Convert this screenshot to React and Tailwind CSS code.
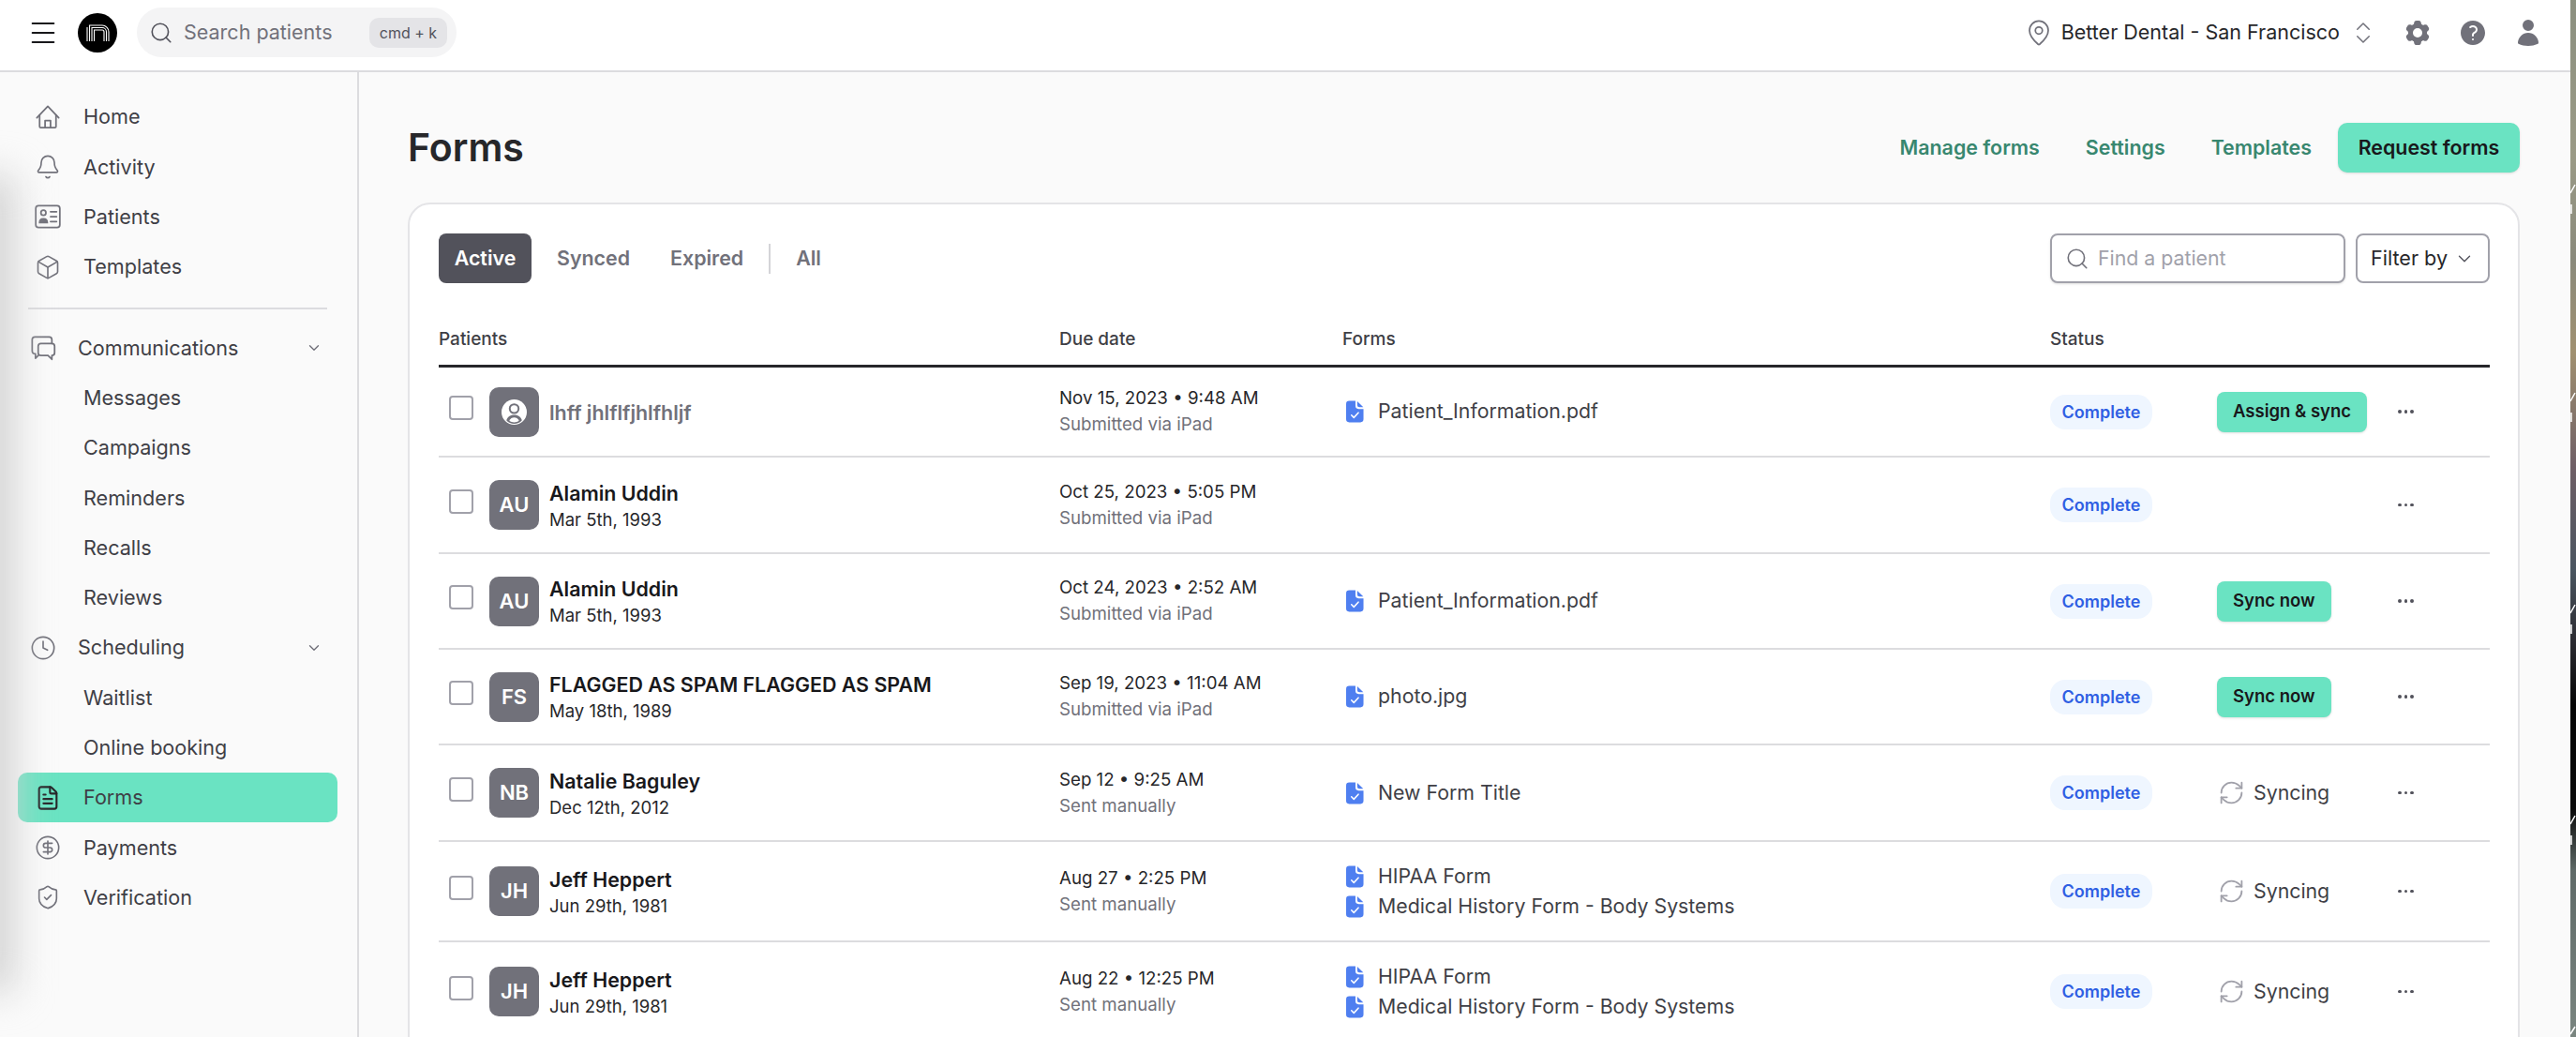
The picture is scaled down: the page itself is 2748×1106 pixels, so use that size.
import React from "react";
import { Bell, Box, ChevronDown, ChevronsUpDown, CircleDollarSign, Clock, FileText, MapPin, Menu, RefreshCw, Search, ShieldCheck } from "lucide-react";
import { HiCog6Tooth, HiQuestionMarkCircle, HiUser } from "react-icons/hi2";

const HomeIcon = ({ className }) => (
  <svg viewBox="0 0 24 24" fill="none" stroke="currentColor" strokeWidth="1.5" strokeLinecap="round" strokeLinejoin="round" className={className}>
    <path d="M2 12.500 12 2l10 10.500" />
    <path d="M4.500 10v10.500a1 1 0 0 0 1 1h13a1 1 0 0 0 1-1V10" />
    <path d="M9.500 21.500v-6.500h5v6.500" />
  </svg>
);

const PatientsIcon = ({ className }) => (
  <svg viewBox="0 0 24 24" fill="none" stroke="currentColor" strokeWidth="1.5" strokeLinecap="round" className={className}>
    <rect x="1" y="2" width="22" height="20" rx="2.500" />
    <circle cx="8" cy="8.500" r="2.300" />
    <path d="M4.500 17.500c0-2.300 1.500-3.500 3.500-3.500s3.500 1.200 3.500 3.500z" fill="currentColor" />
    <path d="M14.500 7.500H20M14.500 12H20M14.500 16.500H20" />
  </svg>
);

const MessagesIcon = ({ className }) => (
  <svg viewBox="0 0 24 24" fill="none" stroke="currentColor" strokeWidth="1.5" strokeLinecap="round" strokeLinejoin="round" className={className}>
    <path d="M20 8V4.500A2.500 2.500 0 0 0 17.500 2h-13A2.500 2.500 0 0 0 2 4.500v10c0 2 1 3 3 3v4l3-3" />
    <path d="M10 8h10a2.500 2.500 0 0 1 2.500 2.500v6a2.500 2.500 0 0 1-2.500 2.500v3.500L16.500 19H10a2.500 2.500 0 0 1-2.500-2.500v-6A2.500 2.500 0 0 1 10 8z" />
  </svg>
);

const FormFileIcon = () => (
  <svg viewBox="0 0 20 25" className="w-[19px] h-[24px] shrink-0">
    <path d="M3.500 0.500h7v5.500a3.500 3.500 0 0 0 3.500 3.500h5.500v11.500a3.500 3.500 0 0 1-3.500 3.500H3.500A3.500 3.500 0 0 1 0 21V4a3.500 3.500 0 0 1 3.500-3.500z" fill="#4f7ff0" />
    <path d="M12.500 0.800 19.300 7.500H15a2.500 2.500 0 0 1-2.500-2.500z" fill="#4f7ff0" />
    <path d="M6 16.500l2.700 2.700 5-5.500" fill="none" stroke="#fff" strokeWidth="1.600" strokeLinecap="round" strokeLinejoin="round" />
  </svg>
);

const BlankAvatarIcon = () => (
  <svg viewBox="0 0 26 26" className="w-[27px] h-[27px]">
    <circle cx="13" cy="13" r="13" fill="#fff" />
    <circle cx="13" cy="9.500" r="5.500" fill="#71717a" />
    <circle cx="13" cy="9.500" r="3.600" fill="#fff" />
    <path d="M5 21.500c1.500-4 4.500-5.500 8-5.500s6.500 1.500 8 5.500c-2 2.500-5 3.500-8 3.500s-6-1-8-3.500z" fill="#71717a" />
    <path d="M8 22c1-2.500 3-3.500 5-3.500s4 1 5 3.500c-1.500 1-3.300 1.500-5 1.500s-3.500-.5-5-1.500z" fill="#fff" />
  </svg>
);

const Logo = () => (
  <svg viewBox="0 0 42 42" className="w-[42px] h-[42px] shrink-0">
    <circle cx="21" cy="21" r="21" fill="#000" />
    <g fill="none" stroke="#fff" strokeWidth="1.100">
      <path d="M10 30V15M12.500 30V13H26a7 7 0 0 1 7 7v10" />
      <path d="M15 30V15.500H26a4.500 4.500 0 0 1 4.500 4.500v10" />
      <path d="M17.500 30V18H26a2 2 0 0 1 2 2v10" />
    </g>
  </svg>
);

const topNav = [
  { label: "Home", icon: HomeIcon },
  { label: "Activity", icon: Bell },
  { label: "Patients", icon: PatientsIcon },
  { label: "Templates", icon: Box },
];

const lowerNav = [
  { label: "Communications", icon: MessagesIcon, group: true },
  { label: "Messages" },
  { label: "Campaigns" },
  { label: "Reminders" },
  { label: "Recalls" },
  { label: "Reviews" },
  { label: "Scheduling", icon: Clock, group: true },
  { label: "Waitlist" },
  { label: "Online booking" },
  { label: "Forms", icon: FileText, active: true },
  { label: "Payments", icon: CircleDollarSign },
  { label: "Verification", icon: ShieldCheck },
];

const rows = [
  { h: "h-[96px]", initials: null, name: "lhff jhlflfjhlfhljf", dob: null, date: "Nov 15, 2023 • 9:48 AM", sub: "Submitted via iPad", forms: ["Patient_Information.pdf"], action: "Assign & sync" },
  { h: "h-[103px]", initials: "AU", name: "Alamin Uddin", dob: "Mar 5th, 1993", date: "Oct 25, 2023 • 5:05 PM", sub: "Submitted via iPad", forms: [], action: null },
  { h: "h-[102px]", initials: "AU", name: "Alamin Uddin", dob: "Mar 5th, 1993", date: "Oct 24, 2023 • 2:52 AM", sub: "Submitted via iPad", forms: ["Patient_Information.pdf"], action: "Sync now" },
  { h: "h-[102px]", initials: "FS", name: "FLAGGED AS SPAM FLAGGED AS SPAM", dob: "May 18th, 1989", date: "Sep 19, 2023 • 11:04 AM", sub: "Submitted via iPad", forms: ["photo.jpg"], action: "Sync now" },
  { h: "h-[103px]", initials: "NB", name: "Natalie Baguley", dob: "Dec 12th, 2012", date: "Sep 12 • 9:25 AM", sub: "Sent manually", forms: ["New Form Title"], action: "syncing" },
  { h: "h-[107px]", initials: "JH", name: "Jeff Heppert", dob: "Jun 29th, 1981", date: "Aug 27 • 2:25 PM", sub: "Sent manually", forms: ["HIPAA Form", "Medical History Form - Body Systems"], action: "syncing" },
  { h: "h-[107px]", initials: "JH", name: "Jeff Heppert", dob: "Jun 29th, 1981", date: "Aug 22 • 12:25 PM", sub: "Sent manually", forms: ["HIPAA Form", "Medical History Form - Body Systems"], action: "syncing" },
];

const NavRow = ({ item }) => {
  const Icon = item.icon;
  if (item.group) {
    return (
      <div className="h-[53.3px] ml-[19px] mr-[21px] pl-[13px] pr-[16px] flex items-center text-[21.6px] text-[#3f3f46]">
        <Icon className="w-[28px] h-[28px] text-[#71717a] mr-[23px]" strokeWidth={1.4} />
        <span className="flex-1">{item.label}</span>
        <ChevronDown className="w-[18px] h-[18px] text-[#71717a]" strokeWidth={1.8} />
      </div>
    );
  }
  if (!Icon) {
    return <div className="h-[53.3px] ml-[19px] mr-[21px] pl-[70px] flex items-center text-[21.6px] text-[#3f3f46]">{item.label}</div>;
  }
  return (
    <div className={`h-[53.3px] ml-[19px] mr-[21px] pl-[18px] flex items-center text-[21.6px] text-[#3f3f46] rounded-[10px] ${item.active ? "bg-[#6ae3c2]" : ""}`}>
      <Icon className={`w-[28px] h-[28px] mr-[24px] ${item.active ? "text-[#27272a]" : "text-[#71717a]"}`} strokeWidth={item.active ? 1.8 : 1.4} />
      {item.label}
    </div>
  );
};

const TableRow = ({ row }) => (
  <div className={`${row.h} grid grid-cols-[662px_302px_755px_178px_193px_1fr] items-center border-b-2 border-[#dcdcdf]`}>
    <div className="flex items-center">
      <div className="w-[26px] h-[26px] ml-[11px] mr-[17px] mb-2 rounded-[4px] border-2 border-[#a1a1aa] bg-white shrink-0" />
      <div className="w-[53px] h-[53px] rounded-[10px] bg-[#71717a] flex items-center justify-center text-white text-[22px] font-semibold shrink-0">
        {row.initials || <BlankAvatarIcon />}
      </div>
      <div className="ml-[11px] pt-[2px]">
        <div className={`text-[21.4px] leading-[28px] font-semibold ${row.initials ? "text-[#18181b]" : "text-[#71717a]"}`}>{row.name}</div>
        {row.dob && <div className="text-[18.5px] leading-[28px] text-[#27272a]">{row.dob}</div>}
      </div>
    </div>
    <div>
      <div className="text-[18.7px] leading-[28px] text-[#27272a]">{row.date}</div>
      <div className="text-[18.7px] leading-[28px] text-[#71717a]">{row.sub}</div>
    </div>
    <div className="flex flex-col gap-[2px] pl-[4px]">
      {row.forms.map((f, i) => (
        <div key={i} className="flex items-center h-[30px] text-[21.3px] text-[#3f3f46]">
          <FormFileIcon />
          <span className="ml-[15px]">{f}</span>
        </div>
      ))}
    </div>
    <div>
      <span className="inline-flex items-center justify-center w-[109px] h-[37px] rounded-[16px] bg-[#eff6ff] text-[#2f5fe3] text-[18px] font-semibold">Complete</span>
    </div>
    <div>
      {row.action === "syncing" ? (
        <div className="flex items-center pl-[1px] text-[21.3px] text-[#3f3f46]">
          <RefreshCw className="w-[29px] h-[29px] text-[#a1a1aa] mr-[9px]" strokeWidth={1.5} />
          Syncing
        </div>
      ) : row.action ? (
        <button className="h-[43px] px-[17px] rounded-[8px] bg-[#6ae3c2] text-[18.5px] font-semibold text-[#18181b] shadow-sm">{row.action}</button>
      ) : null}
    </div>
    <div className="text-[#52525b] flex gap-[3px]">
      <span className="w-[3.500px] h-[3.500px] rounded-full bg-current" />
      <span className="w-[3.500px] h-[3.500px] rounded-full bg-current" />
      <span className="w-[3.500px] h-[3.500px] rounded-full bg-current" />
    </div>
  </div>
);

const App = () => {
  return (
    <div className="w-[2748px] h-[1106px] flex overflow-hidden bg-[#fafafa] font-[Inter,sans-serif] text-[#27272a]">
      <div className="w-[2742px] flex flex-col">
        {/* Top bar */}
        <header className="h-[77px] shrink-0 bg-white border-b-2 border-[#dcdcdf] flex items-center pl-[29px] pr-[29px] pb-[6px]">
          <Menu className="w-[34px] h-[34px] text-[#18181b]" strokeWidth={1.4} />
          <div className="ml-[20px]"><Logo /></div>
          <div className="ml-[21px] w-[341px] h-[53px] rounded-full bg-[#f4f4f5] flex items-center pl-[13px] pr-[10px]">
            <Search className="w-[26px] h-[26px] text-[#52525b]" strokeWidth={1.5} />
            <span className="ml-[11px] flex-1 text-[21.5px] text-[#71717a]">Search patients</span>
            <span className="w-[83px] h-[32px] rounded-[10px] bg-[#e4e4e7] flex items-center justify-center text-[16px] text-[#52525b]">cmd + k</span>
          </div>
          <div className="ml-auto flex items-center">
            <MapPin className="w-[30px] h-[30px] text-[#71717a] mr-[9px]" strokeWidth={1.4} />
            <span className="text-[21.5px] text-[#27272a]">Better Dental - San Francisco</span>
            <ChevronsUpDown className="w-[30px] h-[30px] text-[#71717a] ml-[10px] mr-[27px]" strokeWidth={1.2} />
            <HiCog6Tooth className="w-[32px] h-[32px] text-[#71717a]" />
            <HiQuestionMarkCircle className="w-[32px] h-[32px] text-[#71717a] ml-[27px]" />
            <HiUser className="w-[32px] h-[32px] text-[#71717a] ml-[27px]" />
          </div>
        </header>

        <div className="flex flex-1 min-h-0">
          {/* Sidebar */}
          <aside className="relative w-[383px] shrink-0 border-r-2 border-[#dcdcdf] pt-[21px] overflow-hidden">
            {topNav.map((item) => <NavRow key={item.label} item={item} />)}
            <div className="mt-[17px] mb-[14px] ml-[30px] mr-[32px] h-[2px] bg-[#dcdcdf]" />
            {lowerNav.map((item) => <NavRow key={item.label} item={item} />)}
            <div className="absolute -left-[30px] top-[110px] w-[44px] h-[870px] bg-[#d0d0d0] blur-[20px] pointer-events-none" />
          </aside>

          {/* Main */}
          <main className="flex-1 min-w-0 pl-[52px] pr-[54px] pt-[54px] overflow-hidden">
            <div className="h-[53px] flex items-center">
              <h1 className="text-[41px] font-semibold text-[#27272a]">Forms</h1>
              <div className="ml-auto flex items-center text-[21.4px] font-semibold text-[#38876f]">
                <span className="mr-[49px]">Manage forms</span>
                <span className="mr-[49px]">Settings</span>
                <span className="mr-[28px]">Templates</span>
                <button className="w-[194px] h-[53px] rounded-[10px] bg-[#6ae3c2] text-[#18181b] font-semibold shadow-sm">Request forms</button>
              </div>
            </div>

            <section className="mt-[32px] rounded-t-[24px] border-2 border-[#e4e4e7] bg-white pl-[31px] pr-[30px] pt-[31px]">
              <div className="flex items-center h-[53px] gap-[11px] text-[21.4px] font-semibold text-[#71717a]">
                <button className="w-[99px] h-[53px] rounded-[8px] bg-[#52525b] text-white font-semibold">Active</button>
                <span className="px-4">Synced</span>
                <span className="px-4">Expired</span>
                <span className="w-[2px] h-[32px] bg-[#d4d4d8]" />
                <span className="px-4">All</span>
                <div className="ml-auto flex items-center gap-[11px] font-normal">
                  <div className="w-[315px] h-[53px] rounded-[8px] border-2 border-[#a1a1aa] bg-white flex items-center pl-[14px] shadow-sm">
                    <Search className="w-[26px] h-[26px] text-[#71717a]" strokeWidth={1.5} />
                    <input placeholder="Find a patient" className="ml-[9px] w-[240px] outline-none text-[21.3px] placeholder:text-[#a1a1aa]" />
                  </div>
                  <button className="w-[143px] h-[53px] rounded-[8px] border-2 border-[#a1a1aa] bg-white flex items-center justify-center gap-[7px] text-[21.6px] text-[#27272a]">
                    Filter by
                    <ChevronDown className="w-[22px] h-[22px] text-[#52525b]" strokeWidth={1.5} />
                  </button>
                </div>
              </div>

              <div className="mt-[36px] h-[54px] grid grid-cols-[662px_302px_755px_1fr] items-center border-b-[3px] border-[#27272a] pb-[2px] text-[19px] font-medium text-[#3f3f46]">
                <span>Patients</span>
                <span>Due date</span>
                <span>Forms</span>
                <span>Status</span>
              </div>

              {rows.map((row, i) => <TableRow key={i} row={row} />)}
            </section>
          </main>
        </div>
      </div>

      {/* Desktop wallpaper showing past the window edge */}
      <div className="w-[6px] shrink-0 relative bg-[linear-gradient(to_bottom,#8c9080_0%,#9a9a86_15%,#8a8a7c_25%,#a09070_34%,#6f5f66_45%,#4a5560_55%,#2a2a30_62%,#050505_68%,#0a0a0a_78%,#5f6a68_84%,#7a8580_100%)]">
        <svg viewBox="0 0 6 1106" className="absolute inset-0 w-[6px] h-[1106px]">
          <g fill="none" stroke="#fff" strokeWidth="1.500">
            <path d="M0 206 5 197M1 218v10M0 428 5 419M1 440v10M0 654 5 645M1 666v10M0 879 5 870M1 891v10M0 1103 5 1095" />
          </g>
        </svg>
      </div>
    </div>
  );
};

export default App;
